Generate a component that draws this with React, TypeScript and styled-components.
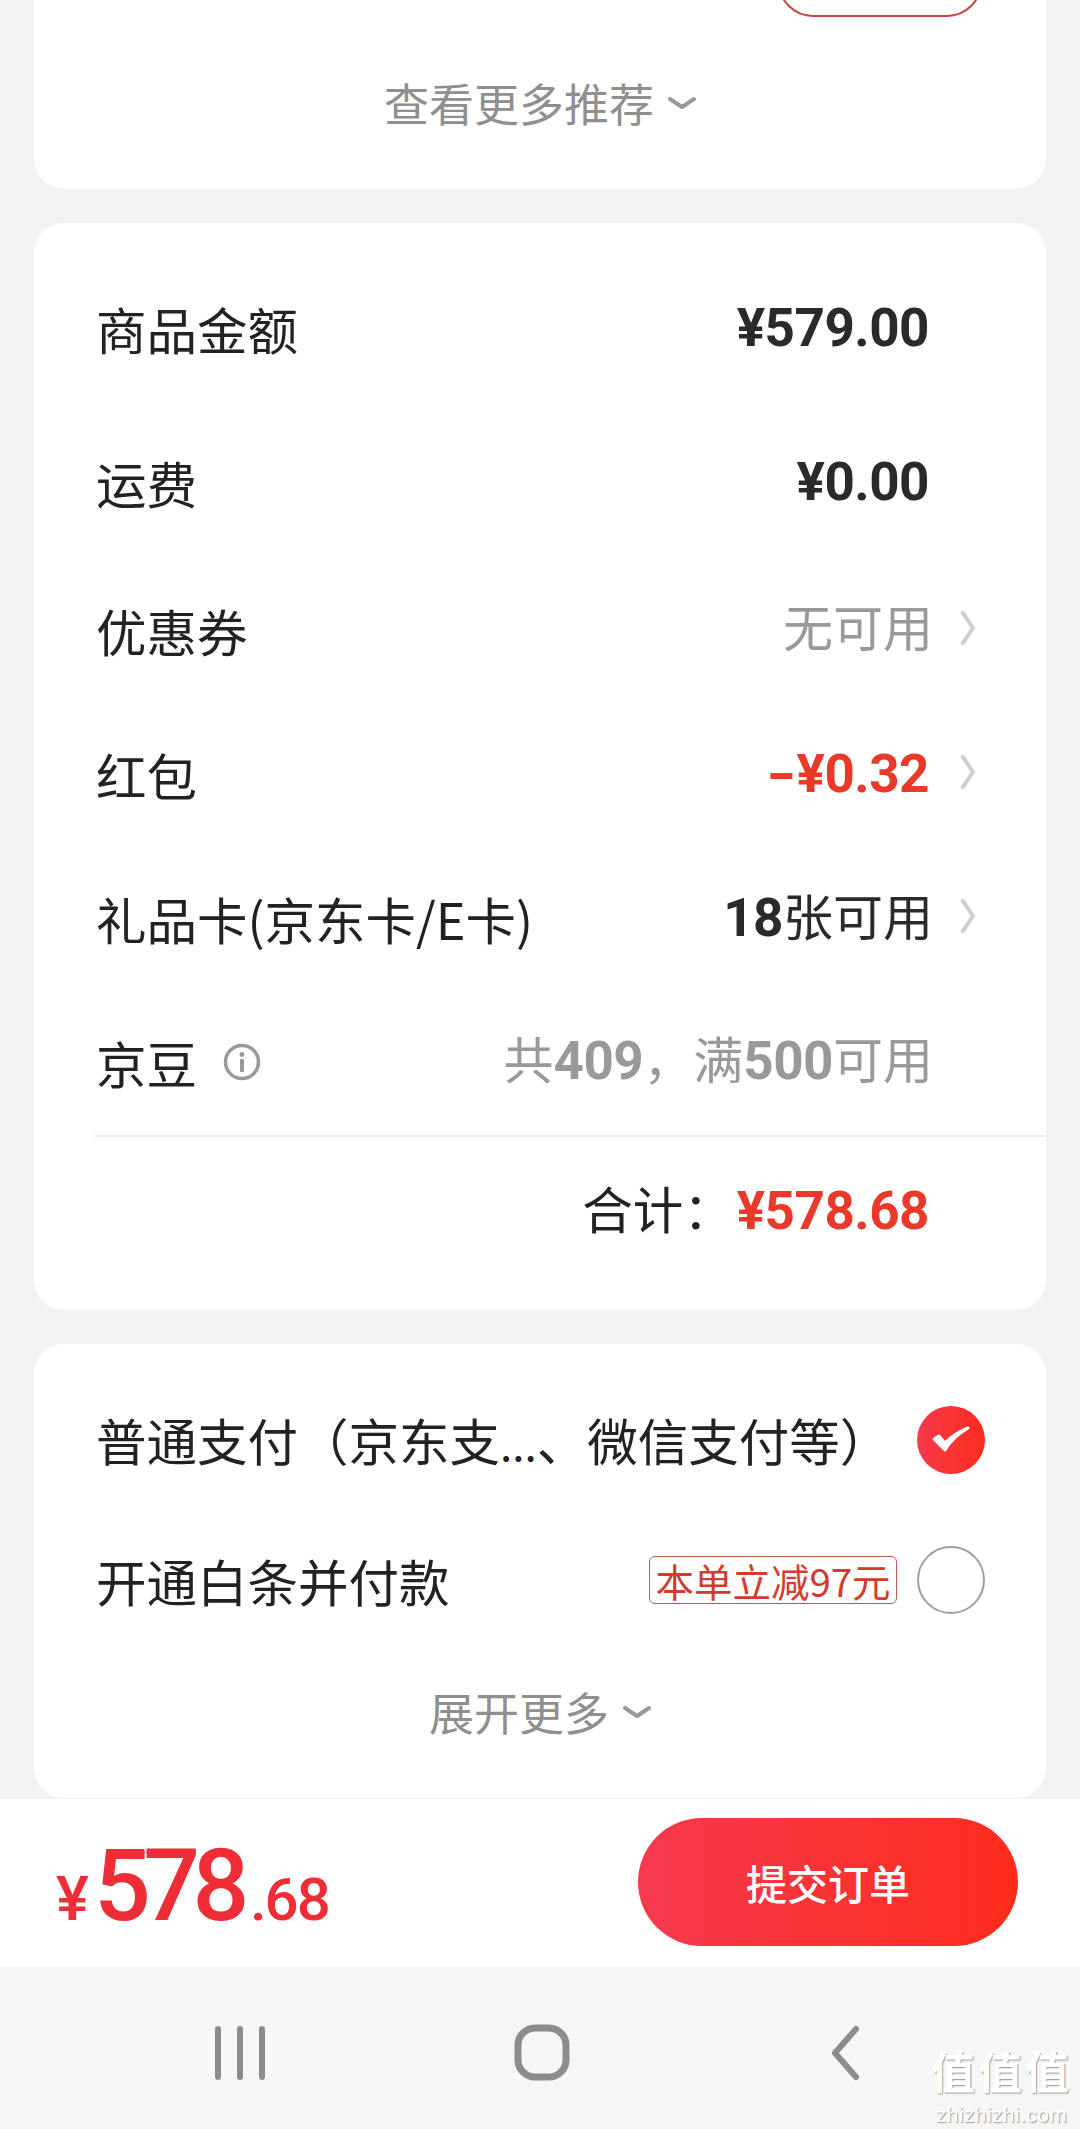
import React from "react";
import styled, { createGlobalStyle } from "styled-components";

const Global = createGlobalStyle`
  html, body { margin: 0; padding: 0; background: #f2f2f2; }
  body { font-family: "Noto Sans CJK SC", "Noto Sans", sans-serif; color: #222; }
`;

const Page = styled.div`
  position: relative;
  width: 1080px;
  height: 2129px;
  overflow: hidden;
  display: flex;
  flex-direction: column;
  background: #f2f2f2;
`;

const Main = styled.main`
  flex: 1;
  display: flex;
  flex-direction: column;
  gap: 34px;
  padding: 0 34px;
`;

const Card = styled.section<{ $top?: boolean }>`
  background: #fff;
  border-radius: ${(p) => (p.$top ? "0 0 30px 30px" : "30px")};
`;

const RecommendCard = styled(Card)`
  height: 189px;
  display: flex;
  flex-direction: column;
`;

const PriceCard = styled(Card)`
  height: 1087px;
  padding-top: 27px;
  box-sizing: border-box;
`;

const PayCard = styled(Card)`
  height: 454px;
  padding-top: 26px;
  box-sizing: border-box;
`;

const PartialClip = styled.div`
  align-self: flex-end;
  margin-right: 64px;
  width: 204px;
  height: 17px;
  overflow: hidden;
  display: flex;
  align-items: flex-end;
`;

const PartialButton = styled.div`
  flex: none;
  width: 100%;
  height: 70px;
  box-sizing: border-box;
  border: 2px solid #c4453f;
  border-radius: 35px;
`;

const More = styled.div<{ $h: number }>`
  height: ${(p) => p.$h}px;
  display: flex;
  align-items: center;
  justify-content: center;
  gap: 14px;
  font-size: 45px;
  line-height: 58px;
  color: #8f8f8f;
`;

const RecommendMore = styled(More)`
  margin-top: 57px;
`;

const Row = styled.div<{ $h: number }>`
  height: ${(p) => p.$h}px;
  padding-left: 62px;
  padding-right: 117px;
  display: flex;
  align-items: center;
  justify-content: space-between;
  position: relative;
`;

const Label = styled.div`
  display: flex;
  align-items: center;
  gap: 26px;
  font-size: 50.5px;
  line-height: 70px;
  color: #222;
  white-space: nowrap;
`;

const Dots = styled.span`
  font-size: 44px;
`;

const Value = styled.div<{ $tone?: "dark" | "muted" | "red"; $lift?: number; $flush?: boolean }>`
  display: flex;
  align-items: baseline;
  font-size: 50px;
  line-height: 70px;
  margin-bottom: ${(p) => p.$lift ?? 0}px;
  margin-right: ${(p) => (p.$flush ? -4 : 0)}px;
  white-space: nowrap;
  color: ${(p) => (p.$tone === "muted" ? "#999" : p.$tone === "red" ? "#e8392b" : "#2a2a2a")};
`;

const Num = styled.span`
  font-family: Roboto, "Liberation Sans", sans-serif;
  font-weight: 700;
  font-size: 53px;
  letter-spacing: -0.5px;
`;

const Minus = styled.span`
  display: inline-block;
  transform: scaleX(1.5);
  transform-origin: left center;
  margin-right: 10px;
`;

const Chevron = styled.svg`
  position: absolute;
  right: 69px;
  top: 50%;
  width: 18px;
  height: 34px;
  margin-top: -19px;
`;

const InfoIcon = styled.svg`
  width: 38px;
  height: 38px;
`;

const Divider = styled.div`
  height: 2px;
  margin-left: 60px;
  background: #eeeeee;
`;

const TotalGroup = styled.div`
  margin-left: auto;
  display: flex;
  align-items: baseline;
  gap: 3px;
  font-size: 50.5px;
  line-height: 70px;
`;

const PayRow = styled.div`
  height: 140px;
  padding: 0 61px 0 62px;
  display: flex;
  align-items: center;
  justify-content: space-between;
`;

const PayRight = styled.div`
  display: flex;
  align-items: center;
  gap: 20px;
`;

const Tag = styled.div`
  height: 48px;
  width: 248px;
  box-sizing: border-box;
  display: flex;
  align-items: center;
  justify-content: center;
  border: 1.5px solid #c0574f;
  border-radius: 6px;
  font-size: 38.5px;
  line-height: 46px;
  color: #d33c2c;
  white-space: nowrap;
`;

const Radio = styled.div`
  width: 68px;
  height: 68px;
  box-sizing: border-box;
  border-radius: 50%;
  border: 2.5px solid #a0a0a0;
`;

const CheckedRadio = styled.div`
  width: 68px;
  height: 68px;
  border-radius: 50%;
  background: linear-gradient(90deg, #f63a4a, #fd2c1e);
  display: flex;
  align-items: center;
  justify-content: center;
`;

const BottomBar = styled.footer`
  height: 168px;
  margin-top: 1px;
  background: #fff;
  box-sizing: border-box;
  padding: 19px 62px 0 56px;
  display: flex;
  justify-content: space-between;
  align-items: flex-start;
`;

const BigPrice = styled.div`
  display: flex;
  align-items: baseline;
  color: #ee2d36;
  font-family: Roboto, "Liberation Sans", sans-serif;
  font-weight: 500;
  margin-top: 13px;
  line-height: 110px;
`;

const Yen = styled.span`
  font-size: 62px;
  margin-right: 5px;
`;

const BigInt = styled.span`
  font-size: 100px;
  letter-spacing: -7.5px;
`;

const BigDec = styled.span`
  font-size: 60px;
  margin-left: 8px;
  letter-spacing: -2px;
`;

const Submit = styled.button`
  width: 380px;
  height: 128px;
  border: none;
  border-radius: 64px;
  background: linear-gradient(90deg, #f6394f, #fd2c1c);
  color: #fff;
  font-family: "Noto Sans CJK SC", sans-serif;
  font-size: 41px;
  font-weight: 500;
  line-height: 56px;
  padding: 0;
`;

const NavBar = styled.nav`
  height: 162px;
  background: #f6f6f6;
  display: grid;
  grid-template-columns: 240px 364px 242px;
  padding-left: 120px;
  padding-top: 56px;
  box-sizing: border-box;
  align-items: start;
  justify-items: center;
`;

const NavIcon = styled.svg`
  width: 70px;
  height: 60px;
`;

const Watermark = styled.div`
  position: absolute;
  right: 8px;
  bottom: 2px;
  display: flex;
  flex-direction: column;
  align-items: center;
  color: #fff;
  text-shadow: 1px 1px 1px #9a9a9a;
  pointer-events: none;
`;

const WatermarkMark = styled.div`
  font-size: 44px;
  line-height: 65px;
  letter-spacing: 3px;
  font-weight: 700;
`;

const WatermarkUrl = styled.div`
  font-family: "Liberation Sans", sans-serif;
  font-size: 21px;
  line-height: 24px;
  letter-spacing: 0.4px;
`;

const DownIcon = () => (
  <svg width="28" height="14" viewBox="0 0 28 14" fill="none">
    <path d="M2 3 L14 11 L26 3" stroke="#999" strokeWidth="4" strokeLinecap="round" strokeLinejoin="round" />
  </svg>
);

const RightIcon = () => (
  <Chevron viewBox="0 0 18 34" fill="none">
    <path d="M4 2 L14 17 L4 32" stroke="#cfcfcf" strokeWidth="4" strokeLinecap="round" strokeLinejoin="round" />
  </Chevron>
);

export default function App() {
  return (
    <Page>
      <Global />
      <Main>
        <RecommendCard $top>
          <PartialClip>
            <PartialButton />
          </PartialClip>
          <RecommendMore $h={58}>
            <span>查看更多推荐</span>
            <DownIcon />
          </RecommendMore>
        </RecommendCard>

        <PriceCard>
          <Row $h={155}>
            <Label>商品金额</Label>
            <Value><Num>¥579.00</Num></Value>
          </Row>
          <Row $h={154}>
            <Label>运费</Label>
            <Value><Num>¥0.00</Num></Value>
          </Row>
          <Row $h={142}>
            <Label>优惠券</Label>
            <Value $tone="muted" $lift={10} $flush>无可用</Value>
            <RightIcon />
          </Row>
          <Row $h={146}>
            <Label>红包</Label>
            <Value $tone="red"><Num><Minus>-</Minus>¥0.32</Num></Value>
            <RightIcon />
          </Row>
          <Row $h={141}>
            <Label>礼品卡(京东卡/E卡)</Label>
            <Value $lift={4} $flush><Num>18</Num>张可用</Value>
            <RightIcon />
          </Row>
          <Row $h={147}>
            <Label>
              京豆
              <InfoIcon viewBox="0 0 38 38" fill="none">
                <circle cx="19" cy="19" r="16.5" stroke="#999" strokeWidth="3.5" />
                <circle cx="19" cy="11.5" r="2.4" fill="#999" />
                <rect x="17" y="16" width="4" height="13" rx="1" fill="#999" />
              </InfoIcon>
            </Label>
            <Value $tone="muted" $lift={5} $flush>共<Num>409</Num>，满<Num>500</Num>可用</Value>
          </Row>
          <Divider />
          <Row $h={144}>
            <TotalGroup>
              合计：
              <Value $tone="red"><Num>¥578.68</Num></Value>
            </TotalGroup>
          </Row>
        </PriceCard>

        <PayCard>
          <PayRow>
            <Label><span>普通支付（京东支<Dots>...</Dots>、微信支付等）</span></Label>
            <CheckedRadio>
              <svg width="40" height="30" viewBox="0 0 40 30" fill="none">
                <path d="M3 14 L14 25 C19 16 27 9 37 3 C27 7 20 12 14 18 L8 11 Z" fill="#fff" stroke="#fff" strokeWidth="3" strokeLinejoin="round" />
              </svg>
            </CheckedRadio>
          </PayRow>
          <PayRow>
            <Label>开通白条并付款</Label>
            <PayRight>
              <Tag>本单立减97元</Tag>
              <Radio />
            </PayRight>
          </PayRow>
          <More $h={124}>
            <span>展开更多</span>
            <DownIcon />
          </More>
        </PayCard>
      </Main>

      <BottomBar>
        <BigPrice>
          <Yen>¥</Yen>
          <BigInt>578</BigInt>
          <BigDec>.68</BigDec>
        </BigPrice>
        <Submit>提交订单</Submit>
      </BottomBar>

      <NavBar>
        <NavIcon viewBox="0 0 70 60" fill="none">
          <path d="M13 6 V54 M35 6 V54 M57 6 V54" stroke="#8c8c8c" strokeWidth="6" strokeLinecap="round" />
        </NavIcon>
        <NavIcon viewBox="0 0 70 60" fill="none">
          <rect x="11" y="5" width="48" height="49" rx="17" stroke="#8c8c8c" strokeWidth="7" />
        </NavIcon>
        <NavIcon viewBox="0 0 70 60" fill="none">
          <path d="M46 6 L25 30 L46 54" stroke="#8c8c8c" strokeWidth="6" strokeLinecap="round" strokeLinejoin="round" />
        </NavIcon>
      </NavBar>

      <Watermark>
        <WatermarkMark>值值值</WatermarkMark>
        <WatermarkUrl>zhizhizhi.com</WatermarkUrl>
      </Watermark>
    </Page>
  );
}
